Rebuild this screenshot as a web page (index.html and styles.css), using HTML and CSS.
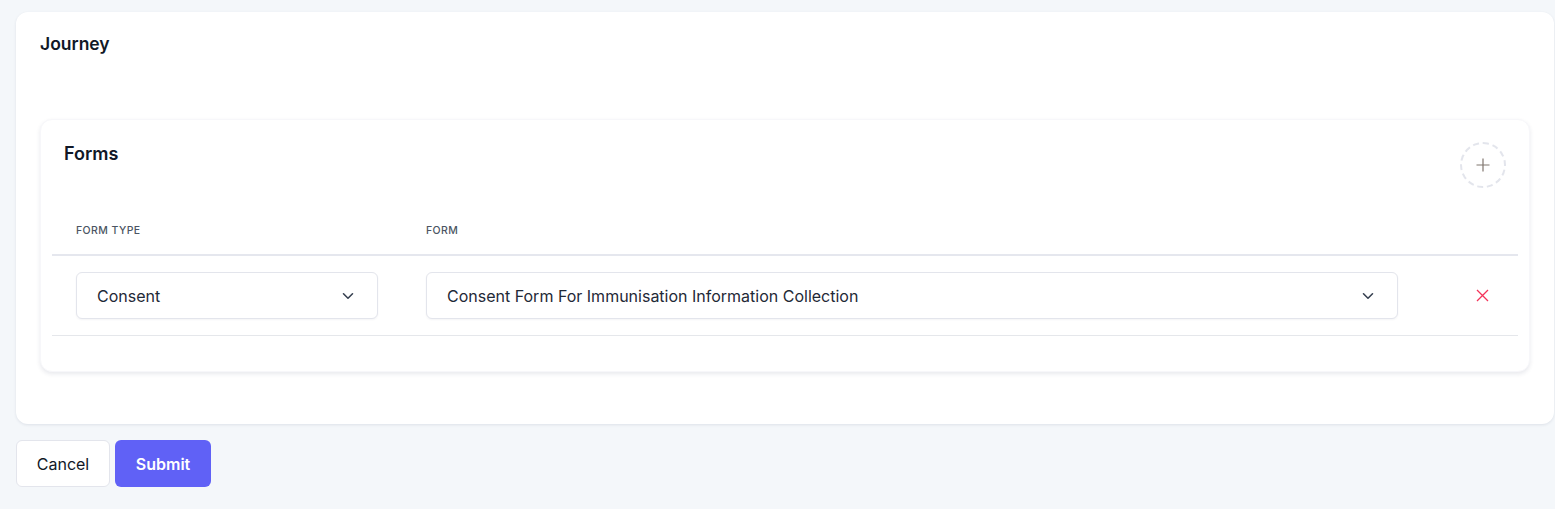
FILE: index.html
```html
<!DOCTYPE html>
<html lang="en">
<head>
<meta charset="utf-8">
<title>Journey</title>
<link rel="stylesheet" href="styles.css">
</head>
<body>
<div class="page">
  <section class="card">
    <h2 class="card-title">Journey</h2>
    <div class="forms-card">
      <div class="forms-head">
        <h3 class="forms-title">Forms</h3>
        <button class="add-btn" type="button" aria-label="Add form">
          <svg width="14" height="14" viewBox="0 0 14 14"><path d="M7 0.5v13M0.5 7h13" stroke="#80766e" stroke-width="1.2" fill="none"/></svg>
        </button>
      </div>
      <div class="table">
        <div class="row head-row">
          <div class="cell th">Form Type</div>
          <div class="cell th">Form</div>
          <div class="cell th"></div>
        </div>
        <div class="row body-row">
          <div class="cell">
            <div class="select">
              <span>Consent</span>
              <svg width="12" height="8" viewBox="0 0 12 8"><path d="M1.5 1.8L6 6.2l4.5-4.4" stroke="#374151" stroke-width="1.6" fill="none" stroke-linecap="round" stroke-linejoin="round"/></svg>
            </div>
          </div>
          <div class="cell">
            <div class="select">
              <span>Consent Form For Immunisation Information Collection</span>
              <svg width="12" height="8" viewBox="0 0 12 8"><path d="M1.5 1.8L6 6.2l4.5-4.4" stroke="#374151" stroke-width="1.6" fill="none" stroke-linecap="round" stroke-linejoin="round"/></svg>
            </div>
          </div>
          <div class="cell action">
            <button class="remove-btn" type="button" aria-label="Remove">
              <svg width="13" height="13" viewBox="0 0 13 13"><path d="M1 1l11 11M12 1L1 12" stroke="#f4345a" stroke-width="1.3" fill="none"/></svg>
            </button>
          </div>
        </div>
      </div>
    </div>
  </section>
  <div class="actions">
    <button class="btn btn-cancel" type="button">Cancel</button>
    <button class="btn btn-submit" type="button">Submit</button>
  </div>
</div>
</body>
</html>
```

FILE: styles.css
```css
* { box-sizing: border-box; }

html, body {
  margin: 0;
  padding: 0;
  background: #f4f7fa;
  font-family: Inter, "Noto Sans", "Liberation Sans", sans-serif;
  color: #111827;
}

.page {
  padding: 12px 1px 0 16px;
}

.card {
  background: #ffffff;
  border-radius: 12px;
  box-shadow: 0 1px 3px rgba(30, 40, 80, 0.10);
  padding: 20px 24px 52px 24px;
}

.card-title {
  margin: 0;
  font-size: 17.5px;
  font-weight: 600;
  line-height: 24px;
  color: #111827;
}

.forms-card {
  margin-top: 63px;
  background: #ffffff;
  border-radius: 12px;
  border: 1px solid #f7f7fa;
  box-shadow: 0 2px 4px rgba(30, 40, 80, 0.10);
  padding: 22px 11px 35px 11px;
}

.forms-head {
  display: flex;
  justify-content: space-between;
  align-items: flex-start;
  padding: 0 12px;
}

.forms-title {
  margin: 0;
  font-size: 18px;
  font-weight: 600;
  line-height: 24px;
  color: #111827;
}

.add-btn {
  width: 46px;
  height: 46px;
  border-radius: 50%;
  border: 2px dashed #e3e5ec;
  background: #fff;
  display: flex;
  align-items: center;
  justify-content: center;
  padding: 0;
  cursor: pointer;
}

.table {
  margin-top: 20px;
}

.row {
  display: grid;
  grid-template-columns: 350px 1020px 1fr;
}

.head-row {
  border-bottom: 2px solid #e5e7ee;
}

.body-row {
  border-bottom: 1px solid #e5e7eb;
}

.cell {
  padding: 16px 24px;
}

.th {
  padding: 15px 24px;
  font-size: 10.5px;
  line-height: 16px;
  font-weight: 500;
  text-transform: uppercase;
  letter-spacing: 0.04em;
  color: #4b5563;
}

.select {
  height: 47px;
  border: 1px solid #e3e5ec;
  border-radius: 6px;
  box-shadow: 0 1px 2px rgba(30, 40, 80, 0.05);
  display: flex;
  align-items: center;
  justify-content: space-between;
  padding: 0 23px 0 20px;
  font-size: 16px;
  color: #1f2937;
  background: #fff;
}

.action {
  display: flex;
  align-items: center;
  justify-content: center;
  padding-left: 48px;
  padding-right: 24px;
}

.remove-btn {
  border: 0;
  background: transparent;
  padding: 0;
  display: flex;
  cursor: pointer;
}

.actions {
  display: flex;
  gap: 5px;
  margin-top: 16px;
}

.btn {
  height: 47px;
  border-radius: 6px;
  font-family: Inter, "Noto Sans", "Liberation Sans", sans-serif;
  font-size: 16px;
  cursor: pointer;
}

.btn-cancel {
  width: 94px;
  background: #ffffff;
  border: 1px solid #e3e5ec;
  color: #111827;
  font-weight: 400;
}

.btn-submit {
  width: 96px;
  background: #6061f6;
  border: 0;
  color: #ffffff;
  font-weight: 600;
}
```
